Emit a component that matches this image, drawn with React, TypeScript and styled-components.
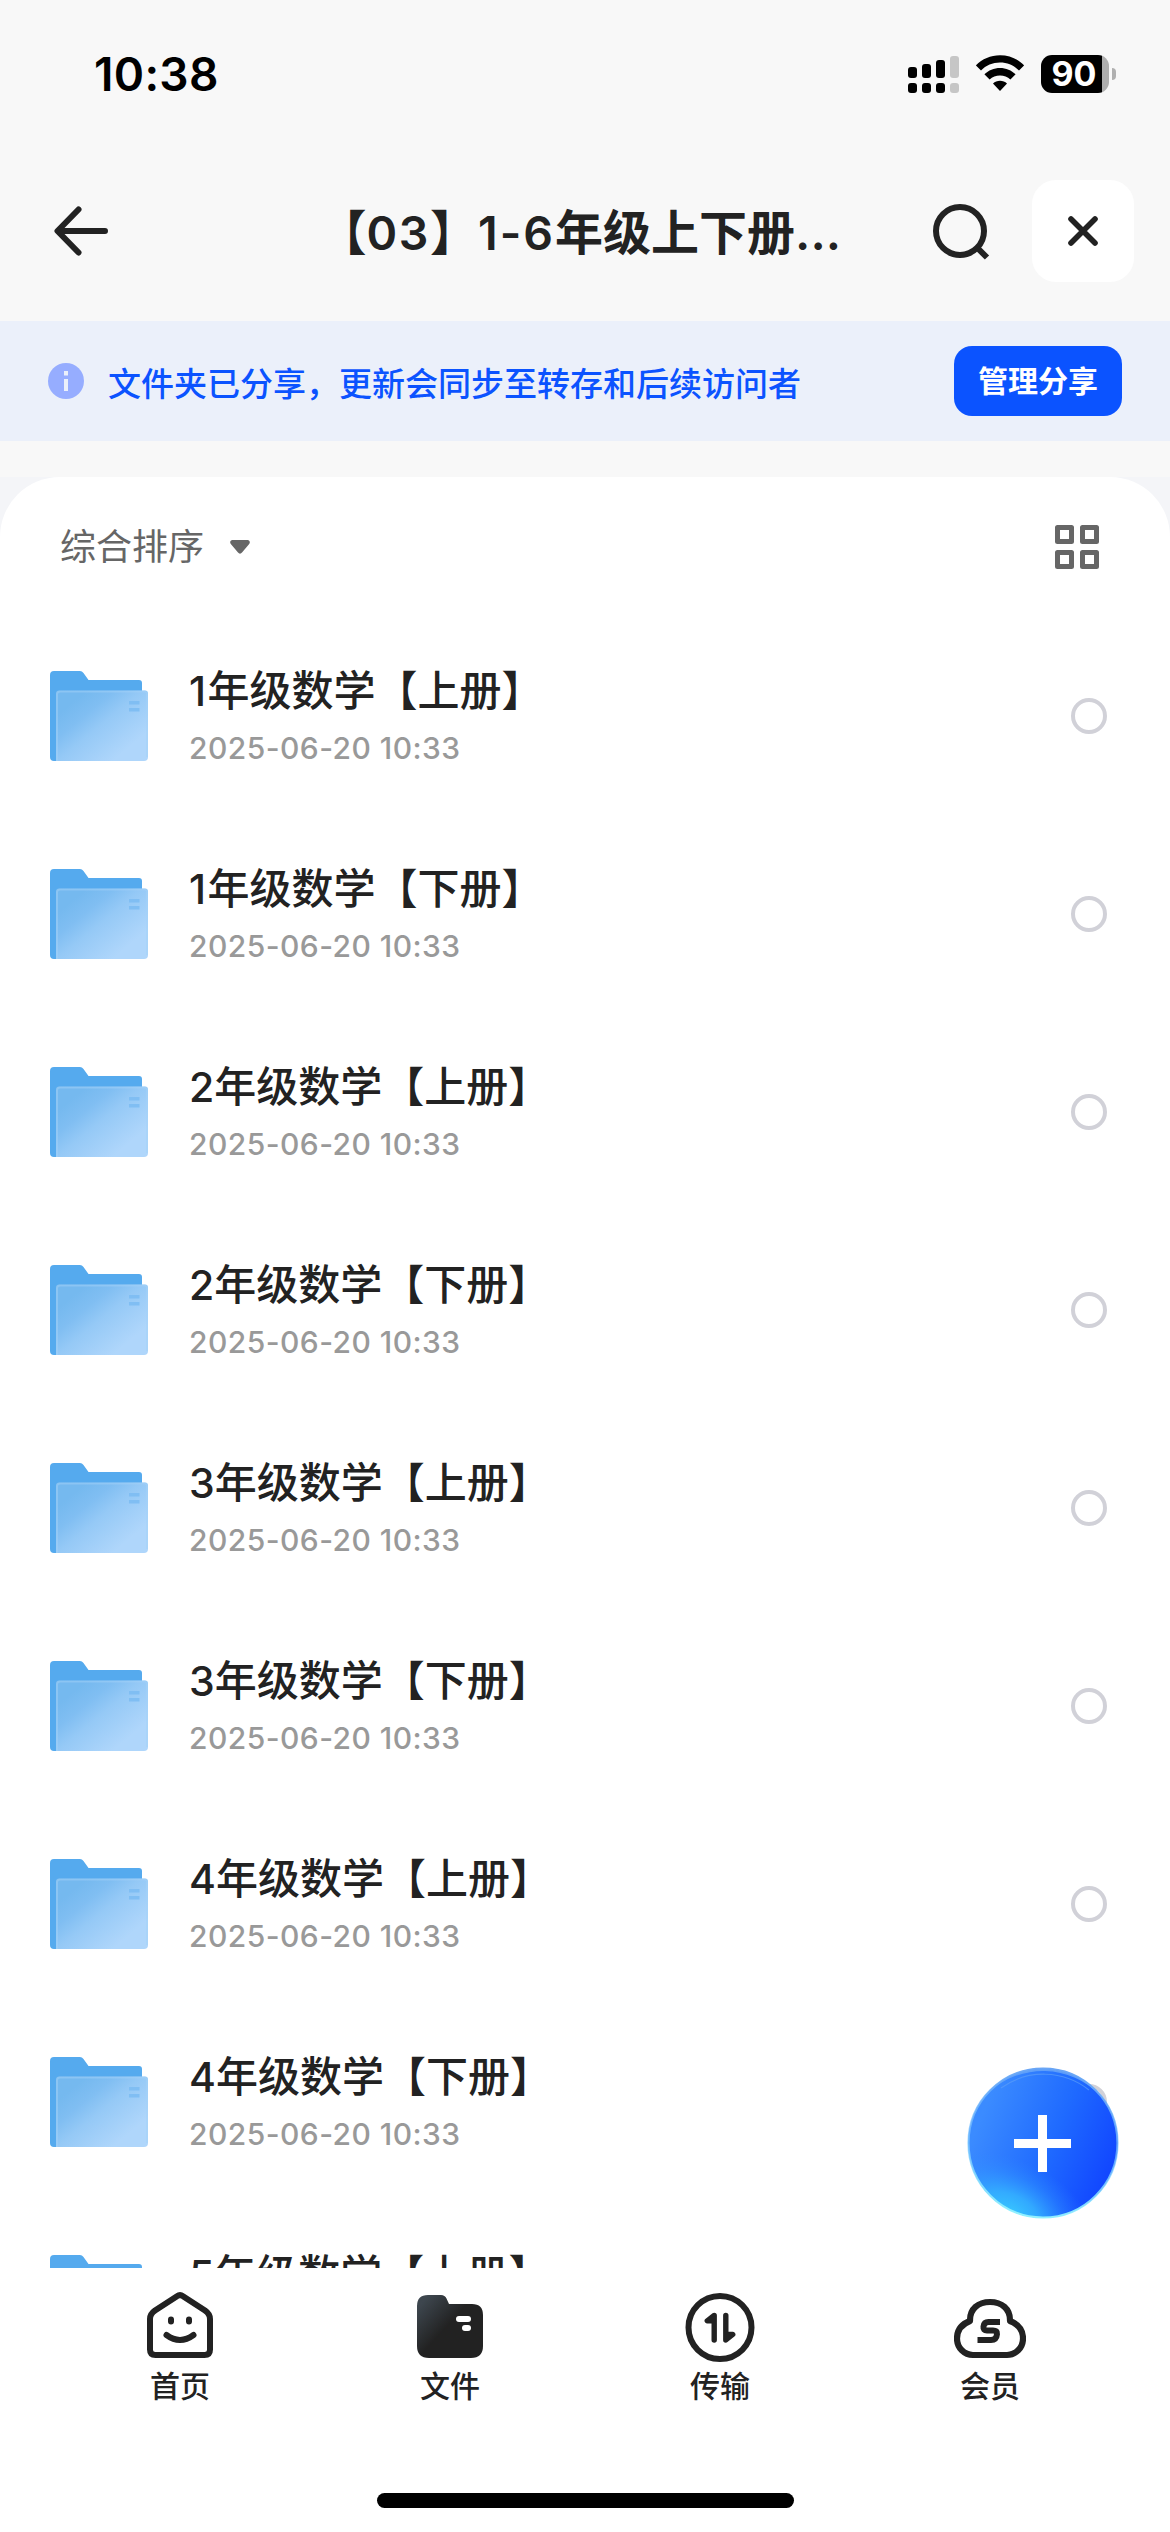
import React from "react";
import styled, { createGlobalStyle } from "styled-components";

const Global = createGlobalStyle`
  *, *::before, *::after { box-sizing: border-box; }
  body { margin: 0; background: #f8f8f8; }
  svg { display: block; flex: none; }
`;

const Screen = styled.div`
  width: 1170px;
  height: 2532px;
  display: flex;
  flex-direction: column;
  overflow: hidden;
  background: #f8f8f8;
  color: #222;
  font-family: Inter, "Noto Sans CJK SC", sans-serif;
`;

const StatusBar = styled.div`
  height: 141px;
  flex: none;
  display: flex;
  justify-content: space-between;
  padding: 55px 54px 0 94px;
`;

const Clock = styled.div`
  height: 38px;
  line-height: 39px;
  font-size: 46px;
  font-weight: 600;
  letter-spacing: 0.3px;
  color: #000;
`;

const StatusIcons = styled.div`
  display: flex;
  align-items: flex-start;
  height: 38px;
  gap: 17px;
`;

const Battery = styled.div`
  display: flex;
  align-items: center;
  gap: 3px;
`;

const BatteryBody = styled.div`
  width: 68px;
  height: 38px;
  padding-right: 2px;
  border-radius: 11px;
  background: linear-gradient(90deg, #000 61px, #aeaeae 61px);
  color: #fff;
  font-size: 34px;
  font-weight: 650;
  line-height: 38px;
  text-align: center;
`;

const BatteryNub = styled.div`
  width: 4px;
  height: 12px;
  border-radius: 0 4px 4px 0;
  background: #b0b0b0;
`;

const Header = styled.header`
  height: 180px;
  flex: none;
  display: grid;
  grid-template-columns: 240px 1fr 102px;
  align-items: center;
  padding: 0 36px 0 54px;
`;

const Title = styled.h1`
  margin: 0;
  padding: 3px 92px 0 0;
  font-size: 48px;
  line-height: 60px;
  font-weight: 600;
  white-space: nowrap;
`;

const TitleArea = styled.div`
  display: flex;
  align-items: center;
  justify-content: flex-end;
  margin-right: 42px;
`;

const Latin = styled.span<{ $size: number; $spacing?: number }>`
  font-size: ${(p) => p.$size}px;
  letter-spacing: ${(p) => p.$spacing ?? 0}px;
`;

const CloseButton = styled.button`
  width: 102px;
  height: 102px;
  border: 0;
  padding: 0;
  border-radius: 24px;
  background: #fff;
  display: grid;
  place-items: center;
`;

const Banner = styled.div`
  height: 120px;
  flex: none;
  display: flex;
  align-items: center;
  padding: 0 48px;
  background: #ebf0fa;
`;

const BannerText = styled.p`
  flex: 1;
  margin: 0 0 0 24px;
  padding-top: 5px;
  font-size: 33px;
  line-height: 48px;
  font-weight: 500;
  color: #0b53ff;
  white-space: nowrap;
`;

const ManageButton = styled.button`
  width: 168px;
  height: 70px;
  padding: 0;
  border: 0;
  border-radius: 18px;
  background: #0b53ff;
  color: #fff;
  font: 700 30px/70px Inter, "Noto Sans CJK SC", sans-serif;
`;

const PanelBack = styled.div`
  flex: 1;
  min-height: 0;
  margin-top: 36px;
  background: #f4f5f8;
`;

const Panel = styled.main`
  height: 100%;
  display: flex;
  flex-direction: column;
  border-radius: 60px 60px 0 0;
  background: #fff;
  overflow: hidden;
`;

const SortBar = styled.div`
  height: 139px;
  flex: none;
  display: flex;
  align-items: center;
  padding: 0 71px 0 60px;
`;

const SortLabel = styled.span`
  margin-right: 26px;
  font-size: 36px;
  line-height: 54px;
  color: #666;
`;

const Spacer = styled.span`
  flex: 1;
`;

const List = styled.ul`
  margin: 0;
  padding: 0;
  list-style: none;
`;

const Row = styled.li`
  height: 198px;
  display: flex;
  align-items: center;
  padding: 1px 63px 0 50px;
`;

const RowText = styled.div`
  flex: 1;
  display: flex;
  flex-direction: column;
  gap: 7px;
  margin-left: 41px;
`;

const FileName = styled.div`
  font-size: 42px;
  line-height: 58px;
  font-weight: 500;
  white-space: nowrap;
`;

const FileDate = styled.div`
  font-size: 30px;
  line-height: 42px;
  letter-spacing: 0.45px;
  font-weight: 450;
  color: #999;
`;

const Radio = styled.span`
  width: 36px;
  height: 36px;
  border: 4px solid #d1d1d8;
  border-radius: 50%;
`;

const TabBar = styled.nav`
  height: 264px;
  flex: none;
  display: flex;
  flex-direction: column;
  align-items: center;
  justify-content: space-between;
  padding: 24px 45px;
  background: #fff;
`;

const Tabs = styled.div`
  width: 100%;
  display: grid;
  grid-template-columns: repeat(4, 1fr);
`;

const Tab = styled.div`
  display: flex;
  flex-direction: column;
  align-items: center;
  font-size: 30px;
  line-height: 44px;
  font-weight: 500;
`;

const TabIcon = styled.svg`
  width: 72px;
  height: 72px;
`;

const HomeIndicator = styled.div`
  width: 417px;
  height: 15px;
  border-radius: 8px;
  background: #000;
`;

const AddButton = styled.button`
  position: absolute;
  left: 967px;
  top: 2067px;
  width: 152px;
  height: 152px;
  padding: 0;
  border: 0;
  background: none;
`;

const Signal = () => (
  <svg width="51" height="38" viewBox="0 0 51 38">
    {[
      { h: 11, y: 12 },
      { h: 14, y: 9 },
      { h: 18, y: 5 },
      { h: 22, y: 1 },
    ].map((b, i) => (
      <g key={i} fill={i === 3 ? "#c6c6c6" : "#000"}>
        <rect x={i * 14} y={b.y} width="9" height={b.h} rx="3" />
        <rect x={i * 14} y="28" width="9" height="10" rx="3" />
      </g>
    ))}
  </svg>
);

const Wifi = () => (
  <svg width="48" height="38" viewBox="0 0 48 38">
    <path d="M24 0.2C33.5 0.2 42 4 48.2 10.4L43 15.6C38 10.5 31.400 7.6 24 7.600C16.600 7.6 10 10.500 5 15.600L-0.2 10.400C6 4 14.500 .2 24 .2Z" />
    <path d="M24 13C30 13 35.500 15.400 39.600 19.300L34.400 24.500C31.600 22 28 20.500 24 20.500C20 20.500 16.400 22 13.600 24.500L8.400 19.300C12.500 15.400 18 13 24 13Z" />
    <path d="M24 25.800C26.700 25.800 29.100 26.800 31 28.500L24 36L17 28.500C18.900 26.800 21.300 25.800 24 25.800Z" />
  </svg>
);

const BackIcon = () => (
  <svg width="54" height="50" viewBox="0 0 54 50" fill="none" stroke="#222" strokeWidth="6" strokeLinecap="round" strokeLinejoin="round">
    <path d="M51 25H4M24.500 3.500L3.500 25L24.500 46.500" />
  </svg>
);

const SearchIcon = () => (
  <svg width="57" height="57" viewBox="0 0 57 57" fill="none" stroke="#222" strokeWidth="6">
    <circle cx="27" cy="28" r="24" />
    <path d="M44 44.500L54 54.500" />
  </svg>
);

const CloseIcon = () => (
  <svg width="30" height="30" viewBox="0 0 30 30" stroke="#222" strokeWidth="5.600" strokeLinecap="round">
    <path d="M3 3L27 27M27 3L3 27" />
  </svg>
);

const InfoIcon = () => (
  <svg width="36" height="36" viewBox="0 0 36 36">
    <circle cx="18" cy="18" r="18" fill="#96adff" />
    <path d="M16 8h4v4.500h-4zM16 16h4v12h-4z" fill="#ebf0fa" />
  </svg>
);

const CaretIcon = () => (
  <svg width="20" height="14" viewBox="0 0 20 14">
    <path d="M2.500 0H17.500C19.800 0 20.600 2.500 19 4.300L12 12.600C10.900 14 9.100 14 8 12.600L1 4.300C-.6 2.500 .2 0 2.500 0Z" fill="#666" />
  </svg>
);

const GridIcon = () => (
  <svg width="44" height="44" viewBox="0 0 44 44" fill="none" stroke="#666" strokeWidth="5" strokeLinejoin="round">
    <path d="M2.500 2.500h14v14h-14zM27.500 2.500h14v14h-14zM2.500 27.500h14v14h-14zM27.500 27.500h14v14h-14z" />
  </svg>
);

const HiddenDefs = styled.svg`
  position: absolute;
`;

const FolderDefs = () => (
  <HiddenDefs width="0" height="0">
    <defs>
      <linearGradient id="folderFront" x1="0.15" y1="0.2" x2="0.8" y2="0.8">
        <stop offset="0" stopColor="#75b9ef" />
        <stop offset="0.25" stopColor="#80bef2" />
        <stop offset="0.5" stopColor="#95c9f6" />
        <stop offset="1" stopColor="#afd6fb" />
      </linearGradient>
    </defs>
  </HiddenDefs>
);

const FolderIcon = () => (
  <svg width="98" height="90" viewBox="0 0 98 90">
    <path d="M4 0H30Q32 0 33.500 2L38.500 9H89Q92 9 92 12V60L10 90H4Q0 90 0 86V4Q0 0 4 0Z" fill="#55aaee" />
    <path d="M9 19.500H95Q98 19.500 98 22.500V86Q98 90 94 90H6V22.500Q6 19.500 9 19.500Z" fill="url(#folderFront)" />
    <path d="M7 90V23.500Q7 20.500 10 20.500H94.500Q97 20.500 97 23V86" fill="none" stroke="#a4d2f8" strokeOpacity=".5" strokeWidth="2" />
    <path d="M79 30h10.500v3.500H79zM79 37h10.500v3.500H79z" fill="#80bef3" />
  </svg>
);

const HomeIcon = () => (
  <TabIcon viewBox="0 0 72 72" fill="none" stroke="#222" strokeWidth="6" strokeLinecap="round" strokeLinejoin="round">
    <path d="M33 4.200Q36 2 39 4.200L61 18.500Q66 22 66 27V57.500Q66 63 60.500 63H11.500Q6 63 6 57.500V27Q6 22 11 18.500Z" />
    <path d="M27 27.500v2M45 27.500v2M22.500 43Q36 53 49.500 43" />
  </TabIcon>
);

const FilesIcon = () => (
  <TabIcon viewBox="0 0 72 72">
    <defs>
      <linearGradient id="filesTab" x1="0.050" y1="0.150" x2="0.450" y2="0.500">
        <stop offset="0" stopColor="#3d464e" />
        <stop offset="1" stopColor="#222" />
      </linearGradient>
    </defs>
    <path d="M14 3H27Q31 3 32.500 6.500L35 12H58Q69 12 69 23V54Q69 66 57 66H15Q3 66 3 54V14Q3 3 14 3Z" fill="url(#filesTab)" />
    <rect x="42" y="24" width="15" height="6" rx="3" fill="#fff" />
    <rect x="48" y="33" width="9" height="6" rx="3" fill="#fff" />
  </TabIcon>
);

const TransferIcon = () => (
  <TabIcon viewBox="0 0 72 72" fill="none" stroke="#222" strokeWidth="6" strokeLinecap="round" strokeLinejoin="round">
    <circle cx="36" cy="35.500" r="31.500" />
    <path d="M30.200 48V23.500L23.300 28.800H30M41.800 23.500V48L48.700 42.500H42" fill="#222" strokeWidth="5.400" />
  </TabIcon>
);

const MemberIcon = () => (
  <TabIcon viewBox="0 0 72 72" fill="none" stroke="#222" strokeWidth="6.200">
    <path d="M16 29V28C16 17 24 10 36 10C48 10 56 17 56 28V29C64 32 69 38 69 46.500C69 56 61.500 63 53 63H19C10.500 63 3 56 3 46.500C3 38 8 32 16 29Z" strokeLinejoin="round" />
    <path d="M46 30H34.500Q30 30 29.500 34.500Q29 38.500 33 38.500H39Q43.500 38.500 43 42Q42.500 48 37 48H23.500" strokeWidth="6" />
  </TabIcon>
);

const AddIcon = () => (
  <svg width="152" height="152" viewBox="0 0 152 152">
    <defs>
      <linearGradient id="addBase" x1="0.1" y1="0.3" x2="0.95" y2="0.65">
        <stop offset="0" stopColor="#3b8bff" />
        <stop offset="0.55" stopColor="#1f6aff" />
        <stop offset="1" stopColor="#1248ff" />
      </linearGradient>
      <radialGradient
        id="addGlow"
        gradientUnits="userSpaceOnUse"
        cx="0"
        cy="0"
        r="1"
        gradientTransform="translate(42 146) rotate(24) scale(88 54)"
      >
        <stop offset="0" stopColor="#38c8ff" />
        <stop offset="0.35" stopColor="#35b4ff" stopOpacity=".85" />
        <stop offset="0.7" stopColor="#329cff" stopOpacity=".35" />
        <stop offset="1" stopColor="#2f8aff" stopOpacity="0" />
      </radialGradient>
      <linearGradient id="addRim" x1="0.55" y1="0" x2="0.4" y2="1">
        <stop offset="0" stopColor="#69a5f5" />
        <stop offset="0.5" stopColor="#7cc4ff" stopOpacity=".7" />
        <stop offset="1" stopColor="#92f2ff" />
      </linearGradient>
    </defs>
    <circle cx="76" cy="76" r="75" fill="url(#addBase)" />
    <circle cx="76" cy="76" r="75" fill="url(#addGlow)" />
    <circle cx="76" cy="76" r="74.500" fill="none" stroke="url(#addRim)" strokeWidth="2.200" />
    <path d="M22 25A75 75 0 0 1 133 28A80 80 0 0 0 22 25Z" fill="#6aa8f8" opacity=".8" />
    <path d="M34 21A73 73 0 0 1 122 23" fill="none" stroke="#5a9cf8" strokeWidth="1.200" opacity=".7" />
    <path d="M71 48h9v24h24v9H80v24h-9V81H47v-9h24z" fill="#fff" />
  </svg>
);

const files = [
  ["1", "上"], ["1", "下"], ["2", "上"], ["2", "下"], ["3", "上"],
  ["3", "下"], ["4", "上"], ["4", "下"], ["5", "上"],
];

const tabs = [
  { label: "首页", Icon: HomeIcon },
  { label: "文件", Icon: FilesIcon },
  { label: "传输", Icon: TransferIcon },
  { label: "会员", Icon: MemberIcon },
];

export default function App() {
  return (
    <Screen>
      <Global />
      <FolderDefs />
      <StatusBar>
        <Clock>10:38</Clock>
        <StatusIcons>
          <Signal />
          <Wifi />
          <Battery>
            <BatteryBody>90</BatteryBody>
            <BatteryNub />
          </Battery>
        </StatusIcons>
      </StatusBar>

      <Header>
        <BackIcon />
        <TitleArea>
          <Title>
            【<Latin $size={46.5} $spacing={1.6}>03</Latin>】
            <Latin $size={46.5} $spacing={2}>1-6</Latin>年级上下册<Latin $size={48}>...</Latin>
          </Title>
          <SearchIcon />
        </TitleArea>
        <CloseButton>
          <CloseIcon />
        </CloseButton>
      </Header>

      <Banner>
        <InfoIcon />
        <BannerText>文件夹已分享，更新会同步至转存和后续访问者</BannerText>
        <ManageButton>管理分享</ManageButton>
      </Banner>

      <PanelBack>
        <Panel>
          <SortBar>
            <SortLabel>综合排序</SortLabel>
            <CaretIcon />
            <Spacer />
            <GridIcon />
          </SortBar>
          <List>
            {files.map(([grade, part]) => (
              <Row key={grade + part}>
                <FolderIcon />
                <RowText>
                  <FileName>
                    <Latin $size={41} $spacing={grade === "1" ? 1.5 : 0}>{grade}</Latin>年级数学【{part}册】
                  </FileName>
                  <FileDate>2025-06-20 10:33</FileDate>
                </RowText>
                <Radio />
              </Row>
            ))}
          </List>
        </Panel>
      </PanelBack>

      <TabBar>
        <Tabs>
          {tabs.map(({ label, Icon }) => (
            <Tab key={label}>
              <Icon />
              {label}
            </Tab>
          ))}
        </Tabs>
        <HomeIndicator />
      </TabBar>

      <AddButton>
        <AddIcon />
      </AddButton>
    </Screen>
  );
}
